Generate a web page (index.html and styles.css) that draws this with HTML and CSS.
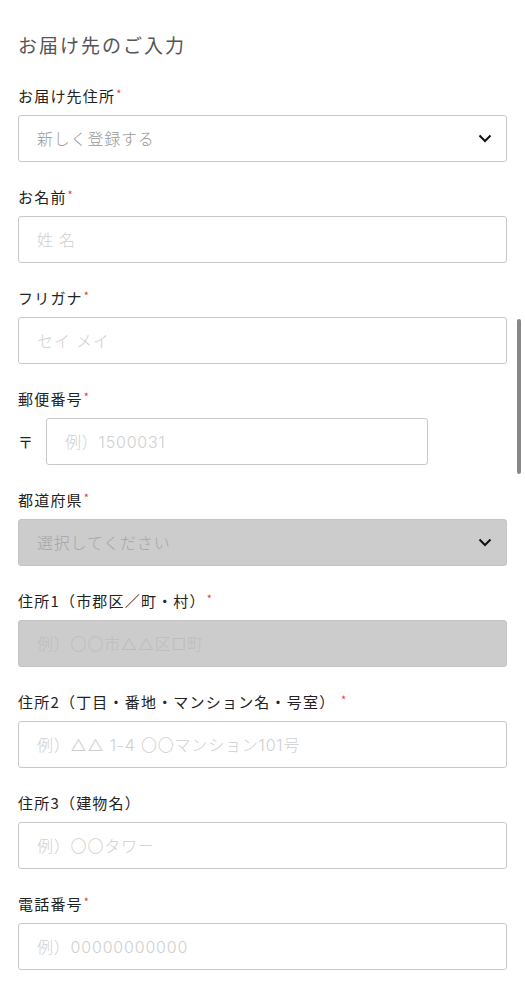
FILE: index.html
```html
<!DOCTYPE html>
<html lang="ja">
<head>
    <meta charset="UTF-8">
    <meta name="viewport" content="width=device-width, initial-scale=1.0">
    <title>お届け先のご入力</title>
    <link rel="stylesheet" href="styles.css">
</head>
<body>
    <div class="page">
        <h1 class="title">お届け先のご入力</h1>
        <form id="addressForm">
            <div class="field">
                <label class="label">お届け先住所<span class="req">*</span></label>
                <div class="select-wrap">
                    <select class="control select" name="address_book">
                        <option>新しく登録する</option>
                    </select>
                    <svg class="chevron" width="14" height="9" viewBox="0 0 14 9"><path d="M1.5 1.5 L7 7 L12.5 1.5" fill="none" stroke="#111" stroke-width="2"/></svg>
                </div>
            </div>
            <div class="field">
                <label class="label">お名前<span class="req">*</span></label>
                <input class="control" type="text" name="name" placeholder="姓 名">
            </div>
            <div class="field">
                <label class="label">フリガナ<span class="req">*</span></label>
                <input class="control" type="text" name="kana" placeholder="セイ メイ">
            </div>
            <div class="field">
                <label class="label">郵便番号<span class="req">*</span></label>
                <div class="zip-row">
                    <span class="zip-mark">〒</span>
                    <input class="control zip" type="text" name="zip" placeholder="例）1500031">
                </div>
            </div>
            <div class="field">
                <label class="label">都道府県<span class="req">*</span></label>
                <div class="select-wrap">
                    <select class="control select disabled" name="pref" disabled>
                        <option>選択してください</option>
                    </select>
                    <svg class="chevron" width="14" height="9" viewBox="0 0 14 9"><path d="M1.5 1.5 L7 7 L12.5 1.5" fill="none" stroke="#111" stroke-width="2"/></svg>
                </div>
            </div>
            <div class="field">
                <label class="label">住所1（市郡区／町・村）<span class="req">*</span></label>
                <input class="control disabled" type="text" name="address1" placeholder="例）〇〇市△△区□町" disabled>
            </div>
            <div class="field">
                <label class="label">住所2（丁目・番地・マンション名・号室） <span class="req">*</span></label>
                <input class="control" type="text" name="address2" placeholder="例）△△ 1-4 〇〇マンション101号">
            </div>
            <div class="field">
                <label class="label">住所3（建物名）</label>
                <input class="control" type="text" name="address3" placeholder="例）〇〇タワー">
            </div>
            <div class="field">
                <label class="label">電話番号<span class="req">*</span></label>
                <input class="control" type="tel" name="tel" placeholder="例）00000000000">
            </div>
        </form>
    </div>
    <div class="scrollbar"></div>
</body>
</html>
```

FILE: styles.css
```css
body {
    margin: 0;
    font-family: "Noto Sans CJK JP", "Noto Sans", sans-serif;
    background-color: #fff;
    color: #333;
}

.page {
    padding: 31px 18px 20px 18px;
}

.title {
    margin: 0 0 27px 0;
    font-size: 19px;
    font-weight: normal;
    line-height: 28px;
    letter-spacing: 2px;
    color: #555;
}

.field {
    margin-bottom: 25px;
}

.label {
    display: block;
    margin-bottom: 9px;
    font-size: 15px;
    line-height: 20px;
    letter-spacing: 1.2px;
    color: #222;
}

.req {
    color: #e53935;
    font-size: 11px;
    vertical-align: top;
    line-height: 14px;
    margin-left: 1px;
}

.control {
    display: block;
    box-sizing: border-box;
    width: 100%;
    height: 47px;
    margin: 0;
    padding: 0 18px;
    border: 1px solid #c8c8c8;
    border-radius: 3px;
    background-color: #fff;
    font-family: Inter, "Noto Sans CJK JP", sans-serif;
    font-size: 16px;
    font-weight: 300;
    letter-spacing: 0.8px;
    color: #333;
    outline: none;
}

.control::placeholder {
    color: #cfcfcf;
}

.select {
    appearance: none;
    -webkit-appearance: none;
    color: #9a9a9a;
}

.control.disabled {
    background-color: #cccccc;
    border-color: #c4c4c4;
    opacity: 1;
}

.control.disabled::placeholder {
    color: #bdbdbd;
}

.select.disabled {
    color: #a4a4a4;
}

.select-wrap {
    position: relative;
}

.chevron {
    position: absolute;
    right: 15px;
    top: 19px;
    pointer-events: none;
}

.zip-row {
    display: flex;
    align-items: center;
}

.zip-mark {
    width: 28px;
    font-size: 15px;
    color: #222;
}

.control.zip {
    width: 382px;
}

.scrollbar {
    position: fixed;
    left: 517px;
    top: 319px;
    width: 4px;
    height: 155px;
    border-radius: 2px;
    background-color: #888;
}
```
